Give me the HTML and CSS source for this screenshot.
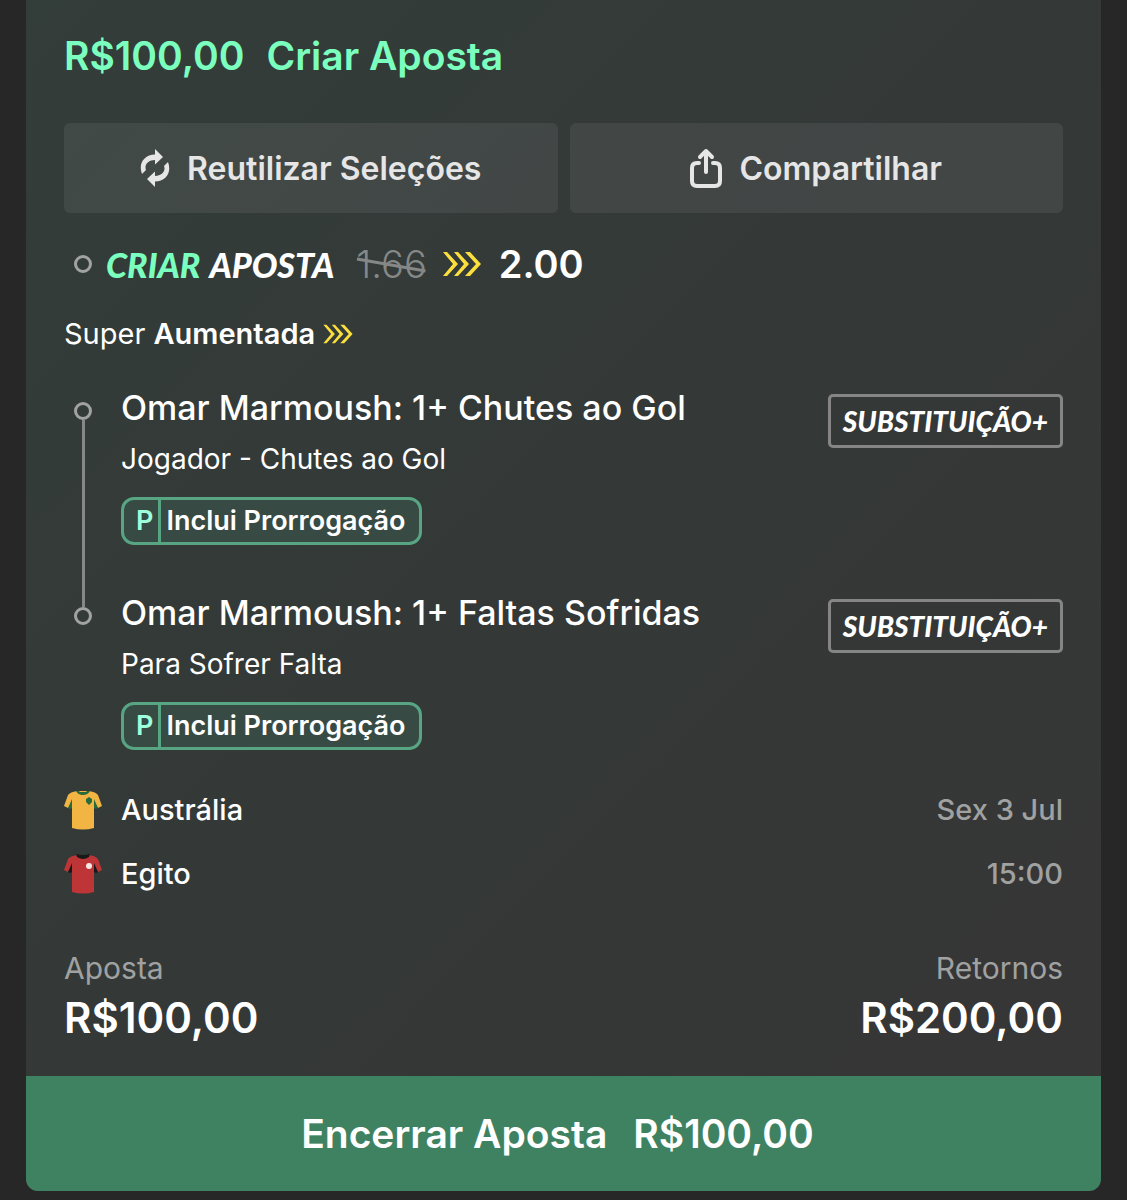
FILE: index.html
```html
<!DOCTYPE html>
<html lang="pt-BR">
<head>
  <meta charset="UTF-8" />
  <meta name="viewport" content="width=device-width, initial-scale=1" />
  <title>Minhas Apostas</title>
  <link rel="stylesheet" href="styles.css">
</head>
<body>
  <!-- setas amarelas, usadas duas vezes -->
  <svg class="sprite" aria-hidden="true">
    <symbol id="boost" viewBox="0 0 38 26">
      <path d="M0 1h4l11 12L4 25H0l10-12zM11 1h4l11 12-11 12h-4l10-12zM22 1h5l11 12-11 12h-5l11-12z" />
    </symbol>
  </svg>

  <main class="card">
    <div class="content">
      <h1 class="bet-title"><span>R$100,00</span><span>Criar Aposta</span></h1>

      <div class="actions">
        <button type="button" class="action">
          <svg class="icon-reuse" viewBox="0 0 30 38" aria-hidden="true">
            <path d="M2 25C-2 15 4 5.500 15 5.500V0l8 8-8 7.500V11C8 11 4 16 6 21z" />
            <path d="M2 25C-2 15 4 5.500 15 5.500V0l8 8-8 7.500V11C8 11 4 16 6 21z" transform="rotate(180 15 19)" />
          </svg>
          Reutilizar Seleções
        </button>
        <button type="button" class="action">
          <svg class="icon-share" viewBox="0 0 32 40" aria-hidden="true">
            <path d="M9 15H7q-5 0-5 5v13q0 5 5 5h18q5 0 5-5V20q0-5-5-5h-2M16 24V3M10 9l6-6 6 6" />
          </svg>
          Compartilhar
        </button>
      </div>

      <div class="odds-row">
        <span class="dot"></span>
        <span class="brand"><em>CRIAR</em><span>APOSTA</span></span>
        <span class="old-odds">1.66
          <svg class="strike" viewBox="0 0 72 24" preserveAspectRatio="none" aria-hidden="true"><path d="M1 6l70 12" /></svg>
        </span>
        <svg class="boost" aria-hidden="true"><use href="#boost" /></svg>
        <strong class="odds">2.00</strong>
      </div>

      <div class="super">
        <span>Super <strong>Aumentada</strong></span>
        <svg class="boost-small" aria-hidden="true"><use href="#boost" /></svg>
      </div>

      <ul class="legs">
        <li class="leg">
          <span class="track"><span class="dot"></span><span class="line"></span></span>
          <div class="leg-info">
            <h2>Omar Marmoush: 1+ Chutes ao Gol</h2>
            <p>Jogador - Chutes ao Gol</p>
            <span class="tag"><b>P</b><span>Inclui Prorrogação</span></span>
          </div>
          <span class="sub-plus">SUBSTITUIÇÃO+</span>
        </li>
        <li class="leg">
          <span class="track"><span class="dot"></span></span>
          <div class="leg-info">
            <h2>Omar Marmoush: 1+ Faltas Sofridas</h2>
            <p>Para Sofrer Falta</p>
            <span class="tag"><b>P</b><span>Inclui Prorrogação</span></span>
          </div>
          <span class="sub-plus">SUBSTITUIÇÃO+</span>
        </li>
      </ul>

      <div class="match">
        <div class="team">
          <svg class="shirt" viewBox="0 0 38 40" aria-hidden="true">
            <path fill="#f2b544" d="M13 1Q6 2 4 5L0 16l4 2 4-6v26q11 3 22 0V12l4 6 4-2-4-11Q32 2 25 1z" />
            <path fill="#276b3b" d="M4 18l4-9v9l-2 1zM34 18l-4-9v9l2 1z" />
            <path fill="#276b3b" d="M12 1h3l1 1h6l1-1h3q-2 4-7 4t-7-4zM22 9l3-2 3 2v3l-3 3-3-3z" />
          </svg>
          <span class="team-name">Austrália</span>
          <span class="when">Sex 3 Jul</span>
        </div>
        <div class="team">
          <svg class="shirt" viewBox="0 0 38 40" aria-hidden="true">
            <path fill="#bd3536" d="M13 1Q6 2 4 5L0 16l4 2 4-6v26q11 3 22 0V12l4 6 4-2-4-11Q32 2 25 1z" />
            <path fill="#171a19" d="M4 18l4-9v9l-2 1zM34 18l-4-9v9l2 1z" />
            <path fill="#171a19" d="M12 0q7 2 14 0l-1 3q-6 4-12 0z" />
            <circle fill="#f4e9e5" cx="25" cy="12" r="3" />
          </svg>
          <span class="team-name">Egito</span>
          <span class="when">15:00</span>
        </div>
      </div>

      <dl class="totals">
        <div>
          <dt>Aposta</dt>
          <dd>R$100,00</dd>
        </div>
        <div class="returns">
          <dt>Retornos</dt>
          <dd>R$200,00</dd>
        </div>
      </dl>
    </div>

    <button type="button" class="cash-out"><span>Encerrar Aposta</span><span>R$100,00</span></button>
  </main>
</body>
</html>
```
FILE: styles.css
```css
* {
  box-sizing: border-box;
}
body {
  margin: 0;
  padding: 0 26px 9px;
  background: #272727;
  color: #fff;
  font-family: Inter, "Liberation Sans", sans-serif;
}
h1, h2, p, ul, dl, dd {
  margin: 0;
  padding: 0;
}
button {
  border: none;
  font-family: inherit;
  cursor: pointer;
}
.sprite {
  position: absolute;
  width: 0;
  height: 0;
}
.card {
  border-radius: 0 0 12px 12px;
  overflow: hidden;
  background: linear-gradient(135deg, #333d39 0%, #343837 55%, #363636 85%);
}
.content {
  padding: 32px 38px 34px;
}
.bet-title {
  display: flex;
  gap: 22px;
  margin-bottom: 43px;
  font-size: 39px;
  font-weight: 600;
  line-height: 48px;
  color: #7bffbf;
}

/* botões */
.actions {
  display: grid;
  grid-template-columns: 1fr 1fr;
  gap: 12px;
  margin-bottom: 27px;
}
.action {
  display: flex;
  align-items: center;
  justify-content: center;
  gap: 17px;
  height: 90px;
  border-radius: 6px;
  background: rgba(255, 255, 255, 0.07);
  color: #e6e6e6;
  font-size: 32px;
  font-weight: 600;
}
.icon-reuse {
  width: 30px;
  height: 38px;
  fill: #e6e6e6;
}
.icon-share {
  width: 32px;
  height: 40px;
  fill: none;
  stroke: #e6e6e6;
  stroke-width: 4;
  stroke-linecap: round;
  stroke-linejoin: round;
}

/* odds */
.odds-row {
  display: flex;
  align-items: center;
  height: 48px;
  margin-bottom: 28px;
  padding-left: 10px;
}
.dot {
  width: 18px;
  height: 18px;
  border: 3px solid #a0a3a2;
  border-radius: 50%;
}
.brand {
  display: flex;
  gap: 9px;
  margin: 0 22px 0 14px;
  font-family: Lato, sans-serif;
  font-size: 34px;
  font-weight: 900;
  font-style: italic;
}
.brand em {
  color: #7bffbf;
}
.old-odds {
  position: relative;
  color: #858887;
  font-size: 38px;
  font-weight: 300;
}
.strike {
  position: absolute;
  left: 0;
  top: 12px;
  width: 100%;
  height: 24px;
  fill: none;
  stroke: #858887;
  stroke-width: 3;
}
.boost {
  width: 38px;
  height: 26px;
  margin: 0 18px 0 16px;
  fill: #fbdf3c;
}
.odds {
  font-size: 38px;
  font-weight: 600;
}
.super {
  display: flex;
  align-items: center;
  gap: 8px;
  margin-bottom: 36px;
  font-size: 29px;
  line-height: 36px;
}
.super strong {
  font-weight: 600;
}
.boost-small {
  width: 30px;
  height: 20px;
  fill: #fbdf3c;
}

/* seleções */
.legs {
  list-style: none;
}
.leg {
  display: flex;
  align-items: flex-start;
}
.leg + .leg {
  margin-top: 48px;
}
.track {
  position: relative;
  width: 57px;
  padding: 14px 0 0 10px;
  align-self: stretch;
}
.track .dot {
  display: block;
}
.line {
  position: absolute;
  left: 18px;
  top: 32px;
  bottom: -62px;
  width: 3px;
  background: #858887;
}
.leg-info {
  flex: 1;
}
.leg-info h2 {
  font-size: 34px;
  font-weight: 500;
  line-height: 40px;
}
.leg-info p {
  margin: 13px 0 20px;
  font-size: 28px;
  line-height: 36px;
}
.tag {
  display: inline-flex;
  align-items: stretch;
  height: 48px;
  border: 3px solid #57a583;
  border-radius: 13px;
  background: #374b44;
  font-size: 27px;
  font-weight: 600;
  line-height: 42px;
  vertical-align: top;
}
.tag b {
  padding: 0 5px 0 12px;
  border-right: 3px solid #57a583;
  color: #9dffdc;
  font-weight: 600;
}
.tag span {
  padding: 0 14px 0 5px;
}
.sub-plus {
  margin-top: 6px;
  padding: 0 12px;
  border: 3px solid #858585;
  border-radius: 5px;
  font-family: Lato, sans-serif;
  font-size: 28px;
  font-weight: 900;
  font-style: italic;
  line-height: 48px;
}

/* partida */
.match {
  display: grid;
  gap: 24px;
  margin: 40px 0 56px;
}
.team {
  display: flex;
  align-items: center;
  font-size: 29px;
  font-weight: 500;
  line-height: 40px;
}
.shirt {
  width: 38px;
  height: 40px;
  margin-right: 19px;
}
.team-name {
  flex: 1;
}
.when {
  color: #a0a1a1;
}
.totals {
  display: flex;
  justify-content: space-between;
}
.returns {
  text-align: right;
}
.totals dt {
  margin-bottom: 8px;
  color: #a0a1a1;
  font-size: 30px;
  line-height: 36px;
}
.totals dd {
  font-size: 42px;
  font-weight: 600;
  line-height: 48px;
}
.cash-out {
  display: flex;
  align-items: center;
  justify-content: center;
  gap: 26px;
  width: 100%;
  height: 115px;
  padding: 0 18px 0 6px;
  background: #3f8262;
  color: #fff;
  font-size: 39px;
  font-weight: 600;
}
```
